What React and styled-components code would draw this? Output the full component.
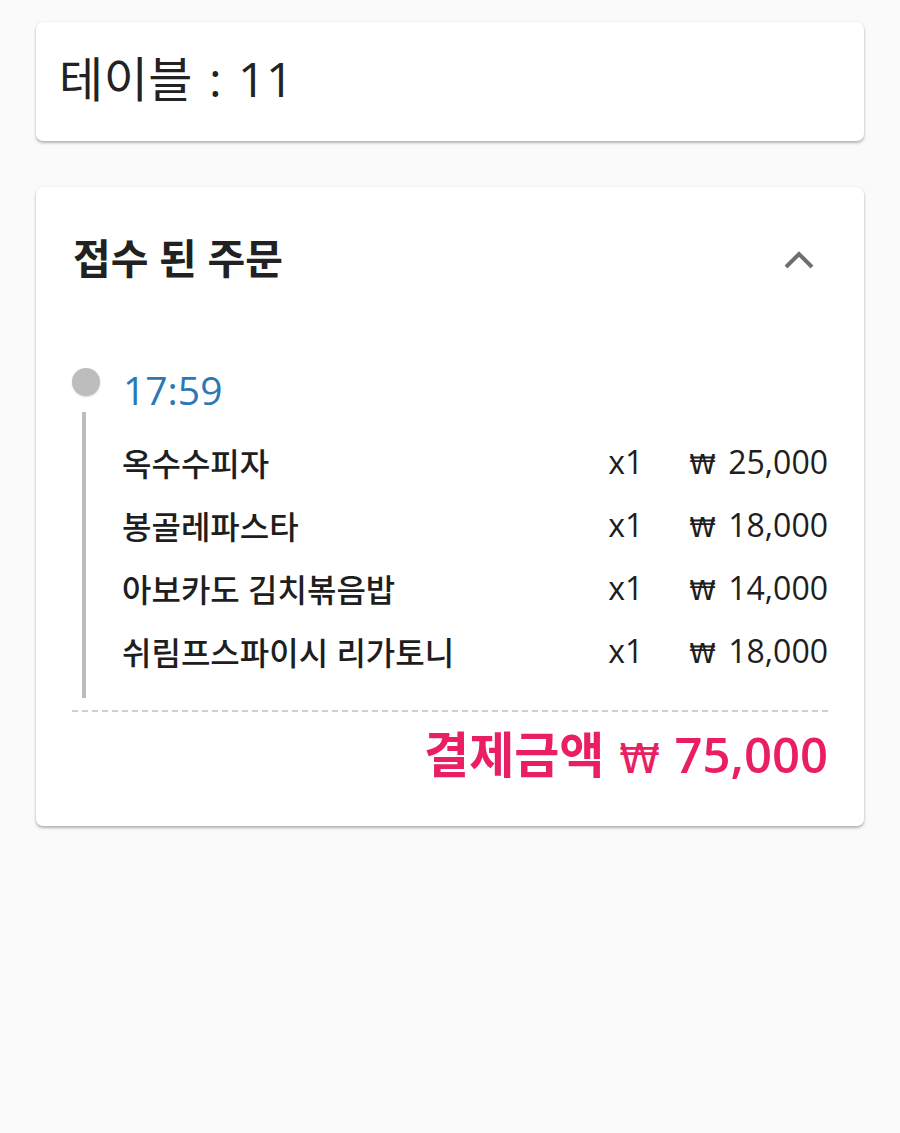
import React from "react";
import styled, { createGlobalStyle } from "styled-components";

const Global = createGlobalStyle`
  html, body { margin: 0; padding: 0; background: #fafafa; }
  body { font-family: "Open Sans", "Noto Sans CJK KR", sans-serif; color: #212121; }
  * { box-sizing: border-box; }
`;

const Page = styled.div`
  padding: 22px 36px;
  display: flex;
  flex-direction: column;
  gap: 46px;
`;

const Card = styled.div`
  background: #fff;
  border-radius: 7px;
  box-shadow: 0 2px 3px rgba(0,0,0,0.28), 0 0 2px rgba(0,0,0,0.08);
`;

const TableCard = styled(Card)`
  height: 119px;
  display: flex;
  align-items: center;
  padding-left: 23px;
  padding-bottom: 12px;
  font-family: "Open Sans", "Noto Sans CJK KR", sans-serif;
  font-size: 48px;
  font-weight: 400;
  letter-spacing: 0.5px;
  word-spacing: 3px;
  color: #222;
`;

const OrderCard = styled(Card)`
  padding: 0 36px 42px 36px;
`;

const Header = styled.div`
  height: 146px;
  display: flex;
  align-items: center;
  justify-content: space-between;
  padding-left: 1px;
  padding-right: 13px;
`;

const Title = styled.h2`
  margin: 0 0 8px;
  font-family: "Open Sans", "Noto Sans CJK KR", sans-serif;
  font-size: 41px;
  font-weight: 700;
  color: #212121;
`;

const Timeline = styled.div`
  margin-top: 35px;
`;

const TimeRow = styled.div`
  display: flex;
  align-items: flex-start;
  gap: 23px;
  height: 44px;
`;

const Dot = styled.span`
  width: 28px;
  height: 28px;
  border-radius: 50%;
  background: #bdbdbd;
  box-shadow: 0 1px 2px rgba(0,0,0,0.15);
  flex: none;
`;

const Time = styled.span`
  font-family: "Open Sans", sans-serif;
  font-size: 39px;
  line-height: 44px;
  color: #2b78b5;
`;

const Items = styled.div`
  margin-left: 10px;
  border-left: 4px solid #bdbdbd;
  padding: 18px 0 16px 36px;
`;

const Item = styled.div`
  height: 63px;
  display: flex;
  align-items: center;
  font-family: "Open Sans", "Noto Sans CJK KR", sans-serif;
  font-size: 32px;
  font-weight: 500;
  color: #1e1e1e;
`;

const Name = styled.span`
  flex: 1;
`;

const Qty = styled.span`
  width: 81px;
  font-weight: 400;
`;

const Price = styled.span`
  text-align: right;
  font-weight: 400;
  white-space: nowrap;
  word-spacing: 4px;
`;

const Won = styled.span`
  font-family: "DejaVu Sans", sans-serif;
  font-size: 0.84em;
  font-weight: 400;
`;

const Divider = styled.div`
  margin-top: 12px;
  border-top: 2px dashed #cfcfcf;
`;

const Total = styled.div`
  text-align: right;
  height: 60px;
  line-height: 60px;
  margin-top: 12px;
  font-family: "Open Sans", "Noto Sans CJK KR", sans-serif;
  font-size: 49px;
  font-weight: 600;
  word-spacing: 2px;
  color: #e91e63;
`;

const Chevron = () => (
  <svg width="32" height="20" viewBox="0 0 32 20">
    <polyline points="3,17 16,4 29,17" fill="none" stroke="#6f6f6f" strokeWidth="4" strokeLinejoin="miter" />
  </svg>
);

const items = [
  { name: "옥수수피자", qty: 1, price: "25,000" },
  { name: "봉골레파스타", qty: 1, price: "18,000" },
  { name: "아보카도 김치볶음밥", qty: 1, price: "14,000" },
  { name: "쉬림프스파이시 리가토니", qty: 1, price: "18,000" },
];

export default function App() {
  return (
    <>
      <Global />
      <Page>
        <TableCard>테이블 : 11</TableCard>
        <OrderCard>
          <Header>
            <Title>접수 된 주문</Title>
            <Chevron />
          </Header>
          <Timeline>
            <TimeRow>
              <Dot />
              <Time>17:59</Time>
            </TimeRow>
            <Items>
              {items.map((it) => (
                <Item key={it.name}>
                  <Name>{it.name}</Name>
                  <Qty>x{it.qty}</Qty>
                  <Price>
                    <Won>₩</Won> {it.price}
                  </Price>
                </Item>
              ))}
            </Items>
          </Timeline>
          <Divider />
          <Total>
            결제금액 <Won>₩</Won> 75,000
          </Total>
        </OrderCard>
      </Page>
    </>
  );
}
